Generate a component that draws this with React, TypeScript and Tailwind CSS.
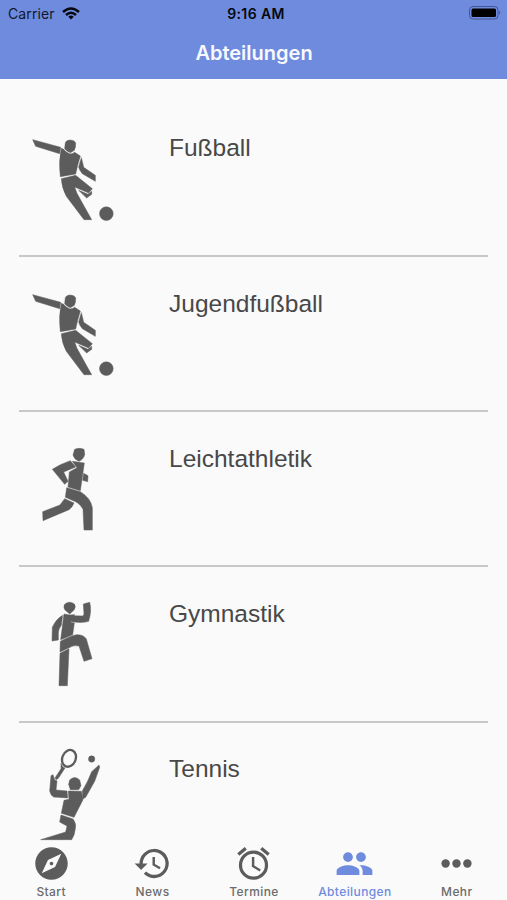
import type { ReactNode } from "react";

function Football() {
  return (
    <>
      <circle cx="259" cy="251" r="20.500" />
      <path d="M38 29 122 52 119 71 47 49Z" />
      <path d="M136 38Q139 30 151 30 163 31 167 38 168 50 163 61L151 68Q139 63 134 56Z" />
      <path d="M124 55 131 58Q137 67 150 72 159 72 164 67L181 78Q173 103 167 132L121 140Q115 96 124 55Z" />
      <path d="M184 83Q188 97 191 112L226 136V154L187 131Q178 121 176 111Z" />
      <path d="M124 146 167 136 217 176 206 189 164 171Q169 190 182 210L215 269H192L139 199Q125 172 124 146Z" />
      <path d="M176 181 204 193 215 184V193L200 204Z" />
    </>
  );
}

function Runner() {
  return (
    <>
      <path d="M164 43Q178 37 192 43L194 58Q192 72 177 79 163 74 159 60Z" />
      <path d="M151 77 167 96 131 111 144 139 134 148 97 103Q121 87 151 77Z" />
      <path d="M157 79 193 84 181 167 144 156 148 111 171 98Z" />
      <path d="M191 115 204 122 203 140 188 136Z" />
      <path d="M140 158 181 170Q213 190 217 218V285H192L189 223Q183 209 167 200L136 187Z" />
      <path d="M134 191 162 204Q158 216 147 224L69 257 68 230 120 210Z" />
    </>
  );
}

function Gymnast() {
  return (
    <>
      <path d="M134 43Q148 31 163 42 169 50 162 60L149 72 135 60Q129 51 134 43Z" />
      <path d="M128 76 124 106Q116 115 115 129V150L96 153 97 112Q109 86 128 76Z" />
      <path d="M132 72 148 75 164 74 152 97 163 99 158 134 122 149Z" />
      <path d="M157 77 188 78 192 73 190 42 209 37Q216 61 206 94 189 100 154 95Z" />
      <path d="M121 154Q150 137 171 134 191 134 199 147L216 206 192 214 177 168Q162 164 147 173L120 186Z" />
      <path d="M120 190 147 176 142 287H117Z" />
    </>
  );
}

function TennisPlayer() {
  return (
    <>
      <ellipse cx="147" cy="55" rx="20" ry="26" transform="rotate(22 147 55)" fill="none" strokeWidth="7" />
      <path d="M123 70 128 81 135 84 115 115 109 119 105 114 123 86Z" />
      <circle cx="215" cy="57" r="9.500" />
      <path d="M237 75 239 82 224 124 197 172 188 177 187 153Q205 122 215 95Z" />
      <path d="M149 120Q164 105 179 120L183 137 176 149 151 149 146 133Z" />
      <path d="M93 107 99 104 104 119 111 123 108 150 141 153 143 174 101 171Q91 165 89 153Z" />
      <path d="M145 153 184 154 189 179 162 232 124 220 132 181 147 178Z" />
      <path d="M123 225 159 237Q170 251 166 266 164 286 155 299H62L137 276 141 258 119 246Z" />
    </>
  );
}

const departments: { name: string; figure: ReactNode; box: string }[] = [
  { name: "Fußball", figure: <Football />, box: "0 0 330 315" },
  { name: "Jugendfußball", figure: <Football />, box: "0 0 330 315" },
  { name: "Leichtathletik", figure: <Runner />, box: "0 18 330 315" },
  { name: "Gymnastik", figure: <Gymnast />, box: "0 18 330 315" },
  { name: "Tennis", figure: <TennisPlayer />, box: "0 33 330 315" },
];

const tabs: { label: string; active?: boolean; icon: ReactNode }[] = [
  {
    label: "Start",
    icon: <path d="M12 10.900c-.61 0-1.100.49-1.100 1.100s.49 1.100 1.100 1.100 1.100-.49 1.100-1.100-.49-1.100-1.100-1.100zM12 2C6.480 2 2 6.480 2 12s4.480 10 10 10 10-4.480 10-10S17.520 2 12 2zm2.190 12.190L6 18l3.810-8.190L18 6l-3.810 8.190z" />,
  },
  {
    label: "News",
    icon: <path d="M13 3a9 9 0 0 0-9 9H1l3.890 3.890.07.14L9 12H6a7 7 0 1 1 2.060 4.940l-1.420 1.420A9 9 0 1 0 13 3zm-1 5v5l4.280 2.540.72-1.210-3.500-2.080V8H12z" />,
  },
  {
    label: "Termine",
    icon: <path d="M22 5.720l-4.600-3.860-1.290 1.530 4.600 3.860L22 5.720zM7.880 3.390L6.600 1.860 2 5.710l1.290 1.530 4.590-3.850zM12.500 8H11v6l4.750 2.850.75-1.230-4-2.370V8zM12 4a9 9 0 1 0 0 18 9 9 0 0 0 0-18zm0 16a7 7 0 1 1 0-14 7 7 0 0 1 0 14z" />,
  },
  {
    label: "Abteilungen",
    active: true,
    icon: <path d="M16 11c1.660 0 2.990-1.340 2.990-3S17.660 5 16 5s-3 1.340-3 3 1.340 3 3 3zm-8 0c1.660 0 2.990-1.340 2.990-3S9.660 5 8 5 5 6.340 5 8s1.340 3 3 3zm0 2c-2.330 0-7 1.170-7 3.500V19h14v-2.500c0-2.330-4.670-3.500-7-3.500zm8 0c-.29 0-.62.02-.97.05 1.160.84 1.970 1.970 1.970 3.450V19h6v-2.500c0-2.330-4.670-3.500-7-3.500z" />,
  },
  {
    label: "Mehr",
    icon: (
      <>
        <circle cx="5.300" cy="12" r="2.600" />
        <circle cx="12" cy="12" r="2.600" />
        <circle cx="18.700" cy="12" r="2.600" />
      </>
    ),
  },
];

export default function App() {
  return (
    <div className="flex h-[900px] w-[507px] flex-col overflow-hidden bg-[#fafafa] font-['Inter','Liberation_Sans',sans-serif]">
      <header className="h-[79px] shrink-0 bg-[#6f8bde]">
        <div className="grid h-[27px] grid-cols-3 items-center pl-2 pr-[5px] text-[#10182c]">
          <div className="flex items-center gap-[7px]">
            <span className="text-[14px] tracking-[0.1px]">Carrier</span>
            <svg className="h-[13px] w-[18px]" viewBox="0 0 18 13" fill="none" stroke="#05080f" strokeWidth="2.500">
              <path d="M1 5Q9-2 17 5M4 8Q9 3.500 14 8" />
              <path d="M6.300 9.700Q9 7.500 11.700 9.700L9 12.400Z" fill="#05080f" stroke="none" />
            </svg>
          </div>
          <span className="ml-[2px] text-center text-[14px] font-semibold tracking-[0.4px] text-[#05080f]">9:16 AM</span>
          <svg className="h-[15px] w-[33px] justify-self-end" viewBox="0 0 33 15">
            <rect x="0.500" y="0.500" width="28.500" height="12.500" rx="3.500" fill="none" stroke="#445690" />
            <rect x="2.500" y="2.500" width="24.500" height="8.500" rx="1.500" fill="#000" />
            <path d="M30.200 5Q32.500 6.700 30.200 8.500Z" fill="#445690" />
          </svg>
        </div>
        <h1 className="flex h-[51px] items-center justify-center pl-px text-[20px] font-semibold text-[#f8f9ff]">Abteilungen</h1>
      </header>

      <main className="min-h-0 flex-1 overflow-hidden px-[19px] pt-[22.500px]">
        {departments.map(({ name, figure, box }) => (
          <div key={name} className="flex h-[155.250px] items-start border-b-2 border-[#c8c8c8] pt-[28.500px]">
            <svg className="ml-px h-[105px] w-[110px] shrink-0 overflow-visible" viewBox={box} fill="#5c5c5c" stroke="#5c5c5c" strokeWidth="1.500">
              {figure}
            </svg>
            <span className="ml-[39px] mt-[4.400px] font-['Liberation_Sans',Arial,sans-serif] text-[24.500px] leading-[28px] text-[#484848]">{name}</span>
          </div>
        ))}
      </main>

      <nav className="grid h-[58px] shrink-0 grid-cols-5 bg-[#fafafa]">
        {tabs.map(({ label, icon, active }) => (
          <div key={label} className={active ? "flex flex-col items-center text-[#6f8bde]" : "flex flex-col items-center pl-px text-[#5c5c5c]"}>
            <svg className="mt-[2px] h-[39px] w-[39px]" viewBox="0 0 24 24" fill="currentColor">{icon}</svg>
            <span className={active ? "mt-px text-[12px] font-medium leading-[16px] tracking-[0.4px]" : "mt-px text-[12px] font-medium leading-[16px] tracking-[0.4px] text-[#6c6c6c]"}>{label}</span>
          </div>
        ))}
      </nav>
    </div>
  );
}
